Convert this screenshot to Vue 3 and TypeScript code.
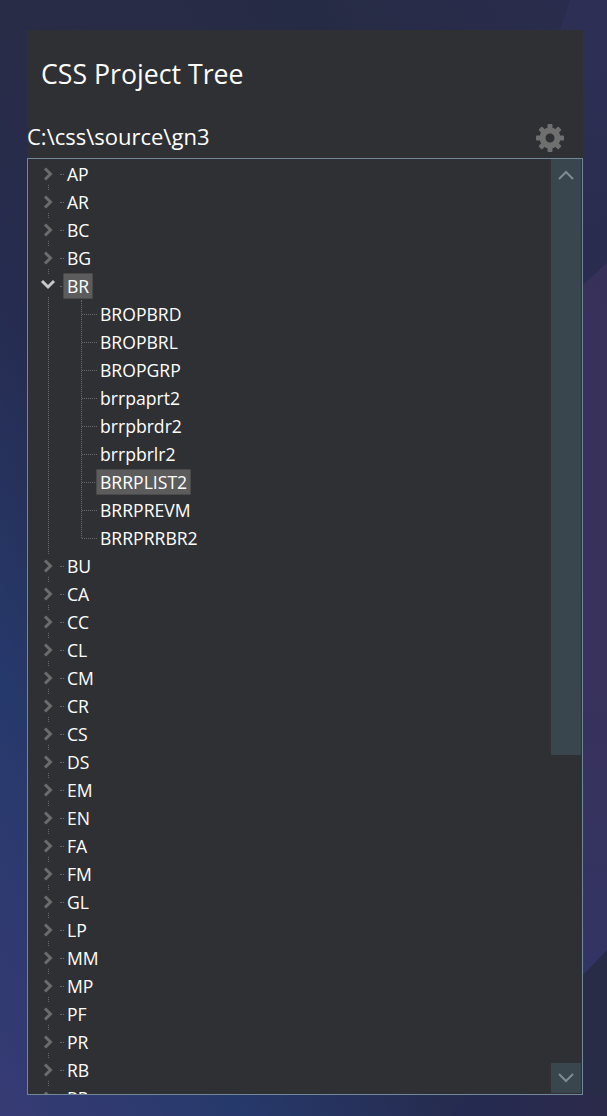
<script setup lang="ts">
interface Kid { label: string; selected?: boolean }
interface TreeNode { label: string; open?: boolean; selected?: boolean; children?: Kid[] }
const tops = ['AP','AR','BC','BG'];
const rest = ['BU','CA','CC','CL','CM','CR','CS','DS','EM','EN','FA','FM','GL','LP','MM','MP','PF','PR','RB','RP'];
const kids = ['BROPBRD','BROPBRL','BROPGRP','brrpaprt2','brrpbrdr2','brrpbrlr2','BRRPLIST2','BRRPREVM','BRRPRRBR2'];
const nodes: TreeNode[] = [
  ...tops.map((label) => ({ label })),
  { label: 'BR', open: true, selected: true, children: kids.map((label) => ({ label, selected: label === 'BRRPLIST2' })) },
  ...rest.map((label) => ({ label })),
];
const teeth = [0, 45, 90, 135, 180, 225, 270, 315];
</script>

<template>
  <div class="page">
    <div class="shape corner"></div>
    <div class="shape band"></div>
    <div class="shape foot"></div>
    <main class="panel">
      <h1 class="title">CSS Project Tree</h1>
      <div class="pathbar">
        <span class="path">C:\css\source\gn3</span>
        <svg class="gear" viewBox="0 0 28 28" width="28" height="28" aria-hidden="true">
          <circle cx="14" cy="14" r="7.5" fill="none" stroke="#6f6f6f" stroke-width="6" />
          <rect v-for="a in teeth" :key="a" x="11.5" y="0" width="5" height="5" rx="1" fill="#6f6f6f" :transform="`rotate(${a} 14 14)`" />
        </svg>
      </div>
      <div class="treebox">
        <ul class="tree">
          <li v-for="n in nodes" :key="n.label" class="node" :class="{ open: n.open }">
            <div class="row">
              <span class="caretbox">
                <svg class="caret" :class="{ down: n.open }" viewBox="0 0 14 14" width="14" height="14" aria-hidden="true">
                  <path v-if="n.open" d="M0 2 6 8 12 2" />
                  <path v-else d="M3 1.5 8.5 7 3 12.5" />
                </svg>
              </span>
              <span class="stub"></span>
              <span class="label" :class="{ selected: n.selected }">{{ n.label }}</span>
            </div>
            <ul v-if="n.children" class="kids">
              <li v-for="c in n.children" :key="c.label" class="row kid">
                <span class="stub kstub"></span>
                <span class="label" :class="{ selected: c.selected }">{{ c.label }}</span>
              </li>
            </ul>
          </li>
        </ul>
        <div class="scrollbar">
          <div class="thumb">
            <svg viewBox="0 0 16 10" width="16" height="10" aria-hidden="true"><path d="M1 9 8 2 15 9" /></svg>
          </div>
          <div class="track"></div>
          <div class="btn">
            <svg viewBox="0 0 16 10" width="16" height="10" aria-hidden="true"><path d="M1 1 8 8 15 1" /></svg>
          </div>
        </div>
      </div>
    </main>
  </div>
</template>

<style>
html, body { margin: 0; background: #2a3060; }
</style>

<style scoped>
.page {
  position: relative;
  box-sizing: border-box;
  width: 607px;
  height: 1116px;
  padding: 30px 24px 21px 27px;
  overflow: hidden;
  background: linear-gradient(to top right, #373b75 0%, #26396b 20%, #262c50 37%, #292c47 50%, #262b45 75%, #2a2d4e 100%);
  font-family: "Open Sans", "Noto Sans", sans-serif;
  color: #fff;
}
.shape { position: absolute; pointer-events: none; }
.corner {
  top: 0;
  left: 540px;
  width: 67px;
  height: 290px;
  background: linear-gradient(180deg, #2d2f55, #2a2c4e);
  clip-path: polygon(30px 0, 100% 0, 100% 263px, 43px 285px, 20px 30px);
}
.band {
  top: 250px;
  left: 583px;
  width: 24px;
  height: 730px;
  background: linear-gradient(180deg, #37315a 0%, #38325c 60%, #323463 100%);
  clip-path: polygon(0 35px, 100% 13px, 100% 700px, 0 725px);
}
.foot {
  top: 1095px;
  left: 440px;
  width: 167px;
  height: 21px;
  background: linear-gradient(90deg, #232a52, #2c2a4b);
  clip-path: polygon(28px 0, 100% 0, 100% 100%, 9px 100%);
}
.panel {
  position: relative;
  display: flex;
  flex-direction: column;
  height: 100%;
  background: #2e3033;
}
.title {
  margin: 0;
  height: 90px;
  padding-left: 14px;
  font-size: 26.7px;
  font-weight: 400;
  line-height: 88px;
}
.pathbar {
  display: flex;
  align-items: center;
  justify-content: space-between;
  height: 38px;
  padding: 0 19px 4px 0;
  box-sizing: border-box;
}
.path { font-size: 22px; line-height: 34px; margin-top: -2px; }
.gear { display: block; margin-top: 2px; }
.treebox {
  flex: 1;
  display: flex;
  min-height: 0;
  border: 1px solid #71889a;
  overflow: hidden;
  background: #2e3033;
}
.tree {
  flex: 1;
  margin: 0;
  padding: 1px 0 0;
  list-style: none;
  overflow: hidden;
  font-size: 17.6px;
}
.kids { margin: 0; padding: 0; list-style: none; position: relative; }
.node { position: relative; }
.node::before {
  content: "";
  position: absolute;
  left: 20px;
  top: 14px;
  bottom: -14px;
  border-left: 1px dotted #6a6a6a;
}
.kids::before {
  content: "";
  position: absolute;
  left: 53px;
  top: 0;
  bottom: 14px;
  border-left: 1px dotted #6a6a6a;
}
.row {
  position: relative;
  display: flex;
  align-items: center;
  height: 28px;
}
.caretbox {
  position: absolute;
  left: 11px;
  top: 3px;
  z-index: 1;
  display: flex;
  align-items: center;
  box-sizing: border-box;
  width: 18px;
  height: 22px;
  padding-left: 3px;
  background: #2e3033;
}
.caret {
  overflow: visible;
  fill: none;
  stroke: #6c6c6c;
  stroke-width: 3;
}
.caret.down { stroke: #c8c8c8; }
.stub {
  flex: none;
  width: 4px;
  margin-left: 32px;
  margin-right: -1px;
  border-top: 1px dotted #6a6a6a;
}
.kstub { width: 15px; margin-left: 54px; }
.label {
  box-sizing: border-box;
  height: 26px;
  padding: 0 3px;
  line-height: 24px;
  border: 1px solid transparent;
  border-radius: 1px;
  white-space: nowrap;
}
.label.selected {
  background: #5c5c5c;
  border-color: #4a4a4a;
}
.scrollbar {
  flex: none;
  display: flex;
  flex-direction: column;
  box-sizing: border-box;
  width: 31px;
  padding: 0 1px 1px 0;
}
.thumb {
  flex: none;
  height: 596px;
  display: flex;
  justify-content: center;
  align-items: flex-start;
  padding-top: 11px;
  box-sizing: border-box;
  background: #3a464e;
}
.track { flex: 1; }
.btn {
  flex: none;
  height: 30px;
  display: flex;
  justify-content: center;
  align-items: center;
  background: #3a464e;
}
.scrollbar svg { fill: none; stroke: #7d8b95; stroke-width: 2; }
</style>
